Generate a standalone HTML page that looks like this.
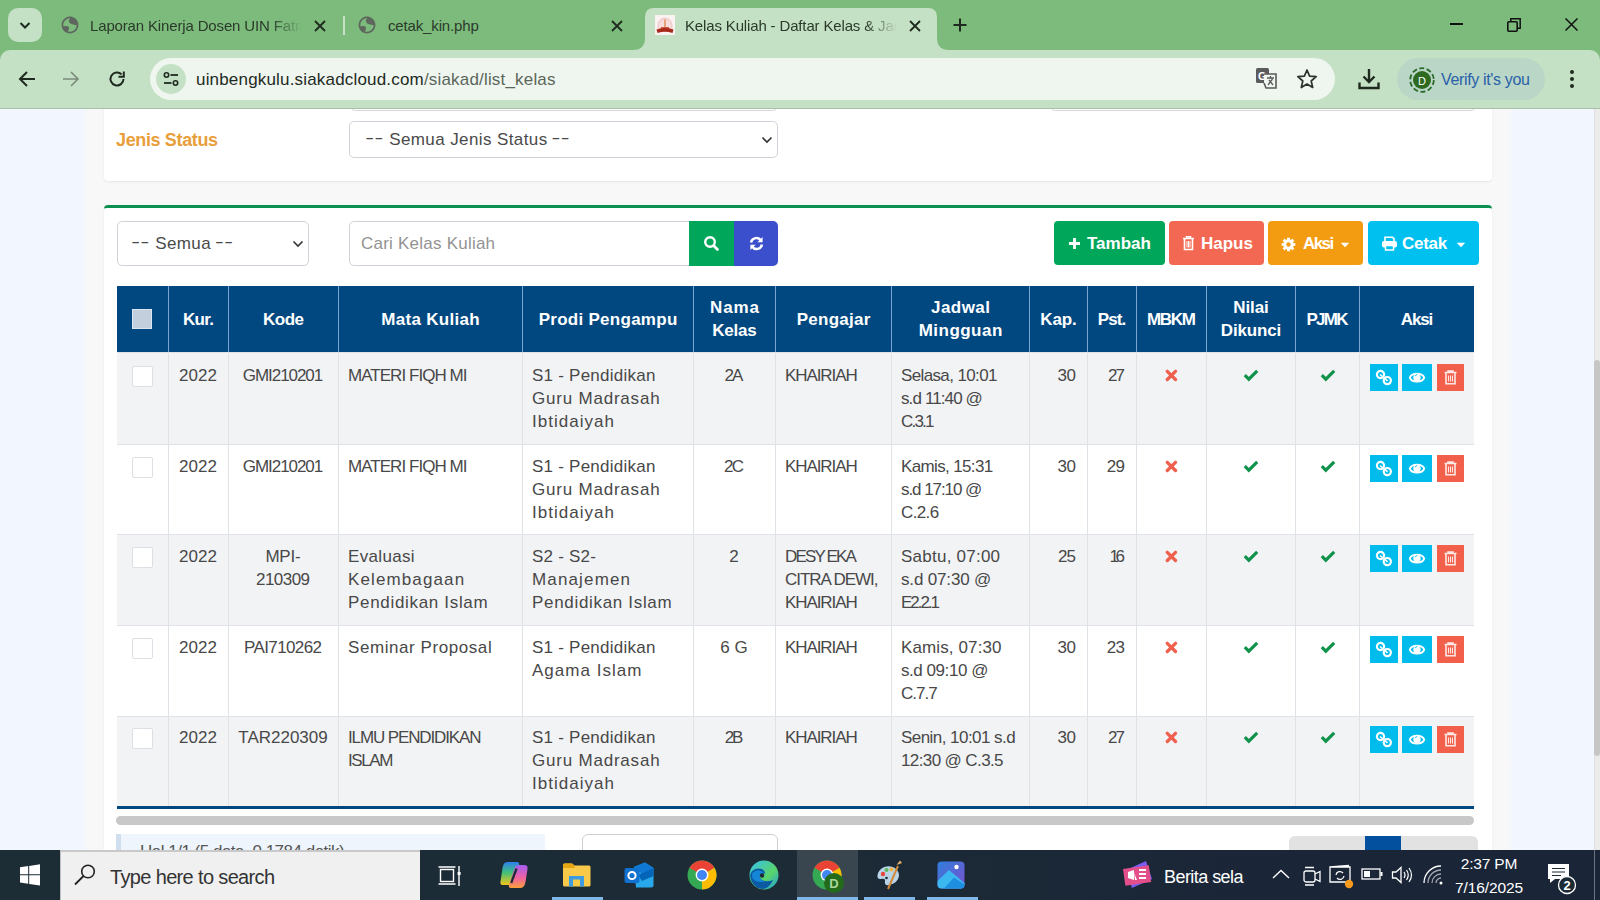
<!DOCTYPE html>
<html><head><meta charset="utf-8">
<style>
*{margin:0;padding:0;box-sizing:border-box}
html,body{width:1600px;height:900px;overflow:hidden;font-family:"Liberation Sans",sans-serif;background:#f8f8f8;position:relative}
.a{position:absolute}
/* chrome */
#tabstrip{left:0;top:0;width:1600px;height:50px;background:#7cbb7c}
#toolbar{left:0;top:50px;width:1600px;height:58px;background:#c5e1c5;border-radius:10px 10px 0 0}
.tabtxt{font-size:15px;letter-spacing:-0.15px;color:#2b3a2b;white-space:nowrap;overflow:hidden}
#omni{left:150px;top:58px;width:1185px;height:42px;border-radius:21px;background:#eff6ef}
/* page */
#page{left:0;top:108px;width:1600px;height:742px;overflow:hidden;background:#f8f8f8}
.card{background:#fff;border-radius:4px;box-shadow:0 1px 2px rgba(0,0,0,.08)}
.sel{border:1px solid #cfd4da;border-radius:5px;background:#fff;font-size:17px;color:#3d3d3d}
.btn{color:#fff;font-size:17px;font-weight:bold;border-radius:4px;white-space:nowrap}
#tbl{left:117px;top:286px}
.th{white-space:nowrap;position:absolute;top:178px;height:66px;background:#014881;color:#fff;font-weight:bold;font-size:17px;text-align:center;display:flex;align-items:center;justify-content:center;line-height:23px;border-left:1px solid #6f9cc8}
.row{position:absolute;left:117px;width:1357px}
.td{position:absolute;top:0;bottom:0;border-left:1px solid #dfe2e6;font-size:17px;color:#3a3a3a;line-height:23px;padding-top:11px;white-space:nowrap}
.tc{font-size:17px;color:#484848;line-height:23px;white-space:nowrap}
.pl{padding-left:10px}.pr{padding-right:11px}
.up{font-size:16px}
.ib{width:28px;height:27px}
.dd{font-size:13px;letter-spacing:2px;position:relative;top:-3px;font-weight:bold}
/* taskbar */
#taskbar{left:0;top:850px;width:1600px;height:50px;background:linear-gradient(90deg,#1c2d36 0%,#1c2b36 50%,#1a2538 85%,#1a2538 100%)}
</style></head><body>

<!-- ============ CHROME ============ -->
<div id="tabstrip" class="a"></div>
<div class="a" style="left:8px;top:8px;width:34px;height:34px;border-radius:10px;background:#c5e1c5"></div>
<svg class="a" style="left:17px;top:17px" width="16" height="16" viewBox="0 0 16 16"><path d="M3.5 6 L8 10.5 L12.5 6" stroke="#1f2a1f" stroke-width="2" fill="none"/></svg>

<!-- tab 1 -->
<svg class="a" style="left:61px;top:16px" width="18" height="18" viewBox="0 0 18 18"><g fill="#5e665e"><path d="M9 0.6A8.4 8.4 0 1 0 9.001 0.6ZM9 2.3A6.7 6.7 0 1 1 8.999 2.3Z" fill-rule="evenodd"/><path d="M9.8 1.5Q7.6 3.6 7.9 5.6Q8.4 7.6 11 8.2L16.6 9.6A7.6 7.6 0 0 0 9.8 1.5Z"/><path d="M1.5 10.4L5.4 10.1Q7.8 10.3 8.1 12.1Q8.2 14.3 5.8 16.4A7.6 7.6 0 0 1 1.5 10.4Z"/></g></svg>
<div class="a tabtxt" style="left:90px;top:17px;width:212px;height:22px;-webkit-mask-image:linear-gradient(90deg,#000 85%,transparent)">Laporan Kinerja Dosen UIN Fatmawati</div>
<svg class="a" style="left:313px;top:19px" width="14" height="14" viewBox="0 0 14 14"><path d="M2 2L12 12M12 2L2 12" stroke="#1f2a1f" stroke-width="1.8"/></svg>
<div class="a" style="left:343px;top:16px;width:2px;height:19px;background:#c7e3c7"></div>
<!-- tab 2 -->
<svg class="a" style="left:358px;top:16px" width="18" height="18" viewBox="0 0 18 18"><g fill="#5e665e"><path d="M9 0.6A8.4 8.4 0 1 0 9.001 0.6ZM9 2.3A6.7 6.7 0 1 1 8.999 2.3Z" fill-rule="evenodd"/><path d="M9.8 1.5Q7.6 3.6 7.9 5.6Q8.4 7.6 11 8.2L16.6 9.6A7.6 7.6 0 0 0 9.8 1.5Z"/><path d="M1.5 10.4L5.4 10.1Q7.8 10.3 8.1 12.1Q8.2 14.3 5.8 16.4A7.6 7.6 0 0 1 1.5 10.4Z"/></g></svg>
<div class="a tabtxt" style="left:388px;top:17px;width:200px;height:22px">cetak_kin.php</div>
<svg class="a" style="left:610px;top:19px" width="14" height="14" viewBox="0 0 14 14"><path d="M2 2L12 12M12 2L2 12" stroke="#1f2a1f" stroke-width="1.8"/></svg>
<!-- active tab -->
<svg class="a" style="left:633px;top:7px" width="316" height="44" viewBox="0 0 316 44"><path d="M0 43 Q12 43 12 31 L12 10 Q12 1 21 1 L295 1 Q304 1 304 10 L304 31 Q304 43 316 43 L316 44 L0 44 Z" fill="#c5e1c5"/></svg>
<svg class="a" style="left:655px;top:15px" width="20" height="20" viewBox="0 0 20 20"><rect width="20" height="20" fill="#fbf3f1"/><path d="M2.5 16V10A7.5 7.5 0 0 1 17.5 10V16Z" fill="#f1cfcf"/><path d="M4 15V10.5A6 6 0 0 1 16 10.5V15Z" fill="#f6dede"/><rect x="9" y="4.5" width="2" height="8" fill="#e8a07a"/><path d="M6 12H14V13.5H15.5V15.5H4.5V13.5H6Z" fill="#d0593c"/><path d="M1.5 14.5Q10 11.5 18.5 14.5L17.5 18Q10 15.5 2.5 18Z" fill="#a82a1c"/></svg>
<div class="a tabtxt" style="left:685px;top:17px;width:212px;height:22px;-webkit-mask-image:linear-gradient(90deg,#000 85%,transparent)">Kelas Kuliah - Daftar Kelas &amp; Jadwal</div>
<svg class="a" style="left:908px;top:19px" width="14" height="14" viewBox="0 0 14 14"><path d="M2 2L12 12M12 2L2 12" stroke="#1f2a1f" stroke-width="1.8"/></svg>
<svg class="a" style="left:953px;top:18px" width="14" height="14" viewBox="0 0 14 14"><path d="M7 0.5V13.5M0.5 7H13.5" stroke="#1f2a1f" stroke-width="2"/></svg>
<!-- window controls -->
<div class="a" style="left:1450px;top:23px;width:13px;height:2px;background:#111"></div>
<svg class="a" style="left:1507px;top:18px" width="14" height="14" viewBox="0 0 14 14"><rect x="0.8" y="3.8" width="9.4" height="9.4" rx="1" stroke="#111" stroke-width="1.6" fill="none"/><path d="M3.8 3.8V0.8H13.2V10.2H10.2" stroke="#111" stroke-width="1.5" fill="none"/></svg>
<svg class="a" style="left:1565px;top:18px" width="13" height="13" viewBox="0 0 13 13"><path d="M0.5 0.5L12.5 12.5M12.5 0.5L0.5 12.5" stroke="#111" stroke-width="1.5"/></svg>

<!-- toolbar -->
<div class="a" style="left:0;top:50px;width:1600px;height:12px;background:#7cbb7c"></div>
<div id="toolbar" class="a"></div>
<svg class="a" style="left:17px;top:69px" width="20" height="20" viewBox="0 0 20 20"><path d="M18 10H3M10 3L3 10L10 17" stroke="#1f2a1f" stroke-width="2" fill="none"/></svg>
<svg class="a" style="left:61px;top:69px" width="20" height="20" viewBox="0 0 20 20"><path d="M2 10H17M10 3L17 10L10 17" stroke="#7a8a7a" stroke-width="1.6" fill="none"/></svg>
<svg class="a" style="left:107px;top:69px" width="20" height="20" viewBox="0 0 20 20"><path d="M16.5 10 A6.5 6.5 0 1 1 14.6 5.4" stroke="#1f2a1f" stroke-width="2" fill="none"/><path d="M16.8 2.5V7.8H11.5" stroke="#1f2a1f" stroke-width="2" fill="none"/></svg>
<div id="omni" class="a"></div>
<div class="a" style="left:156px;top:64px;width:30px;height:30px;border-radius:15px;background:#c5e1c5"></div>
<svg class="a" style="left:163px;top:71px" width="16" height="16" viewBox="0 0 16 16"><circle cx="3.5" cy="4" r="2.2" stroke="#1f2a1f" stroke-width="1.6" fill="none"/><path d="M7.5 4H15" stroke="#1f2a1f" stroke-width="1.8"/><circle cx="12.5" cy="12" r="2.2" stroke="#1f2a1f" stroke-width="1.6" fill="none"/><path d="M1 12H8.5" stroke="#1f2a1f" stroke-width="1.8"/></svg>
<div class="a" style="left:196px;top:70px;letter-spacing:0.18px;font-size:17px;color:#1f2a1f;white-space:nowrap">uinbengkulu.siakadcloud.com<span style="color:#5b665b">/siakad/list_kelas</span></div>
<!-- translate -->
<svg class="a" style="left:1255px;top:67px" width="23" height="23" viewBox="0 0 23 23"><rect x="1" y="1" width="13" height="15" rx="1.5" fill="#5b5b5b"/><text x="3" y="13" font-size="11" font-weight="bold" fill="#fff" font-family="Liberation Sans">G</text><path d="M9 7H21V21H11L9 16" stroke="#5b5b5b" stroke-width="1.6" fill="#eff6ef"/><path d="M12 11H19M15.5 9V11M13 18L17.5 12M14 13L18 18" stroke="#5b5b5b" stroke-width="1.3"/></svg>
<svg class="a" style="left:1296px;top:68px" width="22" height="22" viewBox="0 0 22 22"><path d="M11 2L13.6 8.1L20.2 8.6L15.2 13L16.7 19.5L11 16L5.3 19.5L6.8 13L1.8 8.6L8.4 8.1Z" stroke="#2a332a" stroke-width="1.7" fill="none" stroke-linejoin="round"/></svg>
<!-- download -->
<svg class="a" style="left:1357px;top:67px" width="24" height="24" viewBox="0 0 24 24"><path d="M12 2V15M6.5 9.5L12 15L17.5 9.5M2.5 15.5V21H21.5V15.5" stroke="#1f2a1f" stroke-width="2.4" fill="none"/></svg>
<!-- verify pill -->
<div class="a" style="left:1397px;top:58px;width:148px;height:42px;border-radius:21px;background:#b9d6c7"></div>
<svg class="a" style="left:1407px;top:65px" width="30" height="30" viewBox="0 0 30 30"><circle cx="15" cy="15" r="11.8" stroke="#2b6b2b" stroke-width="1.8" fill="none" stroke-dasharray="5 2.5"/><circle cx="15" cy="15" r="9" fill="#2d6a1f"/><text x="15" y="19.5" text-anchor="middle" font-size="11" fill="#fff" font-family="Liberation Sans">D</text></svg>
<div class="a" style="left:1441px;top:71px;font-size:16px;letter-spacing:-0.35px;color:#2a61a8;white-space:nowrap">Verify it's you</div>
<svg class="a" style="left:1567px;top:68px" width="10" height="22" viewBox="0 0 10 22"><circle cx="5" cy="4" r="2" fill="#1f2a1f"/><circle cx="5" cy="11" r="2" fill="#1f2a1f"/><circle cx="5" cy="18" r="2" fill="#1f2a1f"/></svg>

<!-- ============ PAGE ============ -->
<div id="page" class="a">
<div class="a" style="left:0;top:0;width:88px;height:742px;background:linear-gradient(90deg,#f2f6fe 0,#f2f6fe 83px,#f8f8f8 88px)"></div>
<div class="a" style="left:1508px;top:0;width:86px;height:742px;background:linear-gradient(90deg,#f8f8f8 0,#f2f6fe 5px,#f2f6fe 100%)"></div>
<div class="a" style="left:1594px;top:0;width:6px;height:742px;background:#ebebeb;border-left:1px solid #dedede"></div>
<div class="a" style="left:1594px;top:252px;width:6px;height:396px;background:#c6c6c6;border-radius:3px 3px 3px 3px"></div>
<!-- top card -->
<div class="a card" style="left:104px;top:-40px;width:1388px;height:113px"></div>
<div class="a" style="left:350px;top:-29px;width:428px;height:32px;border:1px solid #d5d9de;border-radius:5px"></div>
<div class="a" style="left:1050px;top:-29px;width:426px;height:32px;border:1px solid #d5d9de;border-radius:5px"></div>
<div class="a" style="left:116px;top:22px;font-size:18px;letter-spacing:-0.36px;font-weight:bold;color:#e89f3b">Jenis Status</div>
<div class="a sel" style="left:349px;top:13px;width:429px;height:37px"></div>
<div class="a" style="left:366px;top:22px;font-size:17px;color:#4a4a4a;white-space:nowrap"><span class="dd">––</span> <span style="letter-spacing:.4px">Semua Jenis Status</span> <span class="dd">––</span></div>
<svg class="a" style="left:761px;top:27px" width="12" height="10" viewBox="0 0 12 10"><path d="M1.5 2.5L6 7L10.5 2.5" stroke="#333" stroke-width="1.6" fill="none"/></svg>
<!-- second card -->
<div class="a card" style="left:104px;top:97px;width:1388px;height:700px;border-top:3px solid #0b9150"></div>
<!-- card2 controls -->
<div class="a sel" style="left:117px;top:113px;width:192px;height:45px"></div>
<div class="a" style="left:132px;top:126px;font-size:17px;color:#4a4a4a;white-space:nowrap"><span class="dd">––</span> <span style="letter-spacing:.4px">Semua</span> <span class="dd">––</span></div>
<svg class="a" style="left:292px;top:131px" width="12" height="10" viewBox="0 0 12 10"><path d="M1.5 2.5L6 7L10.5 2.5" stroke="#333" stroke-width="1.6" fill="none"/></svg>
<div class="a" style="left:349px;top:113px;width:345px;height:45px;border:1px solid #cfd4da;border-radius:5px 0 0 5px;background:#fff"></div>
<div class="a" style="left:361px;top:126px;font-size:17px;letter-spacing:0.23px;color:#939393;white-space:nowrap">Cari Kelas Kuliah</div>
<div class="a" style="left:689px;top:113px;width:45px;height:45px;background:#00a65a"></div>
<svg class="a" style="left:703px;top:127px" width="17" height="17" viewBox="0 0 17 17"><circle cx="7" cy="7" r="4.8" stroke="#fff" stroke-width="2.4" fill="none"/><path d="M10.5 10.5L14.5 14.5" stroke="#fff" stroke-width="2.6" stroke-linecap="round"/></svg>
<div class="a" style="left:734px;top:113px;width:44px;height:45px;background:#3b4fcc;border-radius:0 5px 5px 0"></div>
<svg class="a" style="left:748px;top:127px" width="17" height="17" viewBox="0 0 17 17"><path d="M3 7.5A5.5 5.5 0 0 1 13 5.5M14 9.5A5.5 5.5 0 0 1 4 11.5" stroke="#fff" stroke-width="2.4" fill="none"/><path d="M14.6 2V7.2H9.4Z M2.4 15V9.8H7.6Z" fill="#fff"/></svg>
<div class="a btn" style="left:1054px;top:113px;width:111px;height:44px;background:#00a65a"></div>
<svg class="a" style="left:1068px;top:129px" width="13" height="13" viewBox="0 0 13 13"><path d="M6.5 1V12M1 6.5H12" stroke="#fff" stroke-width="2.8"/></svg>
<div class="a" style="left:1087px;top:126px;font-size:17px;font-weight:bold;color:#fff;white-space:nowrap">Tambah</div>
<div class="a btn" style="left:1169px;top:113px;width:95px;height:44px;background:#f26852"></div>
<svg class="a" style="left:1182px;top:127px" width="13" height="16" viewBox="0 0 13 16"><path d="M1 3.5H12M4.5 3.5V1.8H8.5V3.5" stroke="#fff" stroke-width="1.5" fill="none"/><path d="M2.5 4V14.5H10.5V4" stroke="#fff" stroke-width="1.6" fill="none"/><path d="M5 6V12.5M6.5 6V12.5M8 6V12.5" stroke="#fff" stroke-width="1"/></svg>
<div class="a" style="left:1201px;top:126px;font-size:17px;font-weight:bold;color:#fff;white-space:nowrap">Hapus</div>
<div class="a btn" style="left:1268px;top:113px;width:95px;height:44px;background:#f39c12"></div>
<svg class="a" style="left:1281px;top:129px" width="15" height="15" viewBox="0 0 15 15"><path d="M12.52 6.14 L14.33 5.97 L14.33 9.03 L12.52 8.86 L12.01 10.09 L13.41 11.25 L11.25 13.41 L10.09 12.01 L8.86 12.52 L9.03 14.33 L5.97 14.33 L6.14 12.52 L4.91 12.01 L3.75 13.41 L1.59 11.25 L2.99 10.09 L2.48 8.86 L0.67 9.03 L0.67 5.97 L2.48 6.14 L2.99 4.91 L1.59 3.75 L3.75 1.59 L4.91 2.99 L6.14 2.48 L5.97 0.67 L9.03 0.67 L8.86 2.48 L10.09 2.99 L11.25 1.59 L13.41 3.75 L12.01 4.91Z M9.7 7.5 A2.2 2.2 0 1 0 5.3 7.5 A2.2 2.2 0 1 0 9.7 7.5Z" fill="#fff" fill-rule="evenodd"/></svg>
<div class="a" style="left:1303px;top:126px;letter-spacing:-1.6px;font-size:17px;font-weight:bold;color:#fff;white-space:nowrap">Aksi</div>
<svg class="a" style="left:1340px;top:134px" width="10" height="6" viewBox="0 0 11 7"><path d="M0.5 1H10.5L5.5 6Z" fill="#fff"/></svg>
<div class="a btn" style="left:1368px;top:113px;width:111px;height:44px;background:#00c0ef"></div>
<svg class="a" style="left:1381px;top:128px" width="17" height="15" viewBox="0 0 17 15"><path d="M4 5V1.2H11.5L13 2.7V5" stroke="#fff" stroke-width="1.6" fill="none"/><rect x="1" y="5" width="15" height="6.5" rx="2" fill="#fff"/><rect x="4.5" y="9.5" width="8" height="4.5" fill="#00c0ef" stroke="#fff" stroke-width="1.5"/></svg>
<div class="a" style="left:1402px;top:126px;letter-spacing:-0.3px;font-size:17px;font-weight:bold;color:#fff;white-space:nowrap">Cetak</div>
<svg class="a" style="left:1456px;top:134px" width="10" height="6" viewBox="0 0 11 7"><path d="M0.5 1H10.5L5.5 6Z" fill="#fff"/></svg>
<!--TABLE-->
<div class="a" style="left:117px;top:178px;width:1357px;height:66px;background:#014881"></div>
<div class="a" style="left:132px;top:201px;width:20px;height:20px;background:#c3cfdc;border:1px solid #d9e6f3"></div>
<div class="a th" style="left:168px;width:60px"><div><span style="letter-spacing:-0.63px;margin-right:0.63px">Kur.</span></div></div>
<div class="a th" style="left:228px;width:110px"><div><span style="letter-spacing:-0.46px;margin-right:0.46px">Kode</span></div></div>
<div class="a th" style="left:338px;width:184px"><div><span style="letter-spacing:0.29px;margin-right:-0.29px">Mata Kuliah</span></div></div>
<div class="a th" style="left:522px;width:171px"><div><span style="letter-spacing:0.27px;margin-right:-0.27px">Prodi Pengampu</span></div></div>
<div class="a th" style="left:693px;width:82px"><div><span style="letter-spacing:0.95px;margin-right:-0.95px">Nama</span><br><span style="letter-spacing:-0.19px;margin-right:0.19px">Kelas</span></div></div>
<div class="a th" style="left:775px;width:116px"><div><span style="letter-spacing:0.26px;margin-right:-0.26px">Pengajar</span></div></div>
<div class="a th" style="left:891px;width:138px"><div><span style="letter-spacing:0.47px;margin-right:-0.47px">Jadwal</span><br><span style="letter-spacing:0.48px;margin-right:-0.48px">Mingguan</span></div></div>
<div class="a th" style="left:1029px;width:58px"><div><span style="letter-spacing:-0.13px;margin-right:0.13px">Kap.</span></div></div>
<div class="a th" style="left:1087px;width:49px"><div><span style="letter-spacing:-0.88px;margin-right:0.88px">Pst.</span></div></div>
<div class="a th" style="left:1136px;width:70px"><div><span style="letter-spacing:-1.30px;margin-right:1.30px">MBKM</span></div></div>
<div class="a th" style="left:1206px;width:89px"><div><span style="letter-spacing:-0.13px;margin-right:0.13px">Nilai</span><br><span style="letter-spacing:-0.17px;margin-right:0.17px">Dikunci</span></div></div>
<div class="a th" style="left:1295px;width:64px"><div><span style="letter-spacing:-1.71px;margin-right:1.71px">PJMK</span></div></div>
<div class="a th" style="left:1359px;width:115px"><div><span style="letter-spacing:-1.13px;margin-right:1.13px">Aksi</span></div></div>
<div class="a" style="left:168px;top:178px;width:1px;height:66px;background:#7aa6d1"></div>
<div class="a" style="left:228px;top:178px;width:1px;height:66px;background:#7aa6d1"></div>
<div class="a" style="left:338px;top:178px;width:1px;height:66px;background:#7aa6d1"></div>
<div class="a" style="left:522px;top:178px;width:1px;height:66px;background:#7aa6d1"></div>
<div class="a" style="left:693px;top:178px;width:1px;height:66px;background:#7aa6d1"></div>
<div class="a" style="left:775px;top:178px;width:1px;height:66px;background:#7aa6d1"></div>
<div class="a" style="left:891px;top:178px;width:1px;height:66px;background:#7aa6d1"></div>
<div class="a" style="left:1029px;top:178px;width:1px;height:66px;background:#7aa6d1"></div>
<div class="a" style="left:1087px;top:178px;width:1px;height:66px;background:#7aa6d1"></div>
<div class="a" style="left:1136px;top:178px;width:1px;height:66px;background:#7aa6d1"></div>
<div class="a" style="left:1206px;top:178px;width:1px;height:66px;background:#7aa6d1"></div>
<div class="a" style="left:1295px;top:178px;width:1px;height:66px;background:#7aa6d1"></div>
<div class="a" style="left:1359px;top:178px;width:1px;height:66px;background:#7aa6d1"></div>
<div class="a" style="left:117px;top:244px;width:1357px;height:92px;background:#f2f3f5;border-top:1px solid #dfe2e6"></div>
<div class="a" style="left:168px;top:244px;width:1px;height:92px;background:#dfe2e6"></div>
<div class="a" style="left:228px;top:244px;width:1px;height:92px;background:#dfe2e6"></div>
<div class="a" style="left:338px;top:244px;width:1px;height:92px;background:#dfe2e6"></div>
<div class="a" style="left:522px;top:244px;width:1px;height:92px;background:#dfe2e6"></div>
<div class="a" style="left:693px;top:244px;width:1px;height:92px;background:#dfe2e6"></div>
<div class="a" style="left:775px;top:244px;width:1px;height:92px;background:#dfe2e6"></div>
<div class="a" style="left:891px;top:244px;width:1px;height:92px;background:#dfe2e6"></div>
<div class="a" style="left:1029px;top:244px;width:1px;height:92px;background:#dfe2e6"></div>
<div class="a" style="left:1087px;top:244px;width:1px;height:92px;background:#dfe2e6"></div>
<div class="a" style="left:1136px;top:244px;width:1px;height:92px;background:#dfe2e6"></div>
<div class="a" style="left:1206px;top:244px;width:1px;height:92px;background:#dfe2e6"></div>
<div class="a" style="left:1295px;top:244px;width:1px;height:92px;background:#dfe2e6"></div>
<div class="a" style="left:1359px;top:244px;width:1px;height:92px;background:#dfe2e6"></div>
<div class="a" style="left:132px;top:258px;width:21px;height:21px;background:#fff;border:1px solid #dcdfe3;border-radius:2px"></div>
<div class="a tc" style="left:168px;top:256px;width:60px;text-align:center">2022</div>
<div class="a tc" style="left:228px;top:256px;width:110px;text-align:center"><span style="letter-spacing:-1.07px;margin-right:1.07px">GMI210201</span></div>
<div class="a tc pl" style="left:338px;top:256px;width:184px;text-align:left"><span style="letter-spacing:-0.96px">MATERI FIQH MI</span></div>
<div class="a tc pl" style="left:522px;top:256px;width:171px;text-align:left"><span style="letter-spacing:0.24px">S1 - Pendidikan</span><br><span style="letter-spacing:0.79px">Guru Madrasah</span><br><span style="letter-spacing:1.01px">Ibtidaiyah</span></div>
<div class="a tc" style="left:693px;top:256px;width:82px;text-align:center"><span style="letter-spacing:-1.88px;margin-right:1.88px">2A</span></div>
<div class="a tc pl" style="left:775px;top:256px;width:116px;text-align:left"><span style="letter-spacing:-1.09px">KHAIRIAH</span></div>
<div class="a tc pl" style="left:891px;top:256px;width:138px;text-align:left"><span style="letter-spacing:-0.63px">Selasa, 10:01</span><br><span style="letter-spacing:-0.88px">s.d 11:40 @</span><br><span style="letter-spacing:-1.78px">C.3.1</span></div>
<div class="a tc pr" style="left:1029px;top:256px;width:58px;text-align:right"><span style="letter-spacing:-0.48px;margin-right:0.48px">30</span></div>
<div class="a tc pr" style="left:1087px;top:256px;width:49px;text-align:right"><span style="letter-spacing:-1.88px;margin-right:1.88px">27</span></div>
<div class="a" style="left:1165px;top:260px;width:13px;height:13px"><svg width="13" height="13" viewBox="0 0 13 13"><path d="M2.3 2.3L10.5 10.5M10.5 2.3L2.3 10.5" stroke="#f0604f" stroke-width="3.3" stroke-linecap="round"/></svg></div>
<div class="a" style="left:1243px;top:260px;width:16px;height:13px"><svg width="16" height="13" viewBox="0 0 16 13"><path d="M1.8 6.2L5.8 10.2L14.2 1.8" stroke="#10924a" stroke-width="3.1" fill="none" stroke-linecap="butt"/></svg></div>
<div class="a" style="left:1320px;top:260px;width:16px;height:13px"><svg width="16" height="13" viewBox="0 0 16 13"><path d="M1.8 6.2L5.8 10.2L14.2 1.8" stroke="#10924a" stroke-width="3.1" fill="none" stroke-linecap="butt"/></svg></div>
<div class="a ib" style="left:1370px;top:256px;background:#00bcec"><svg width="28" height="27" viewBox="0 0 28 27"><g stroke="#fff" stroke-width="2.2" fill="none"><circle cx="10.5" cy="10.5" r="3.6"/><circle cx="17.3" cy="16.6" r="3.6"/></g><path d="M10 10.5L13 13M14.5 14L17.5 16.8" stroke="#fff" stroke-width="1.6"/></svg></div>
<div class="a ib" style="left:1402px;top:256px;width:30px;background:#00bcec"><svg width="30" height="27" viewBox="0 0 30 27"><path d="M7.8 13.6C9.6 8.4 20.4 8.4 22.2 13.6C20.4 18.9 9.6 18.9 7.8 13.6Z" stroke="#fff" stroke-width="1.9" fill="none"/><circle cx="15" cy="13.6" r="3.7" fill="#fff"/><path d="M13.2 12.2A2.2 2.2 0 0 1 15.2 10.6" stroke="#00bcec" stroke-width="0.9" fill="none"/></svg></div>
<div class="a ib" style="left:1437px;top:256px;width:27px;background:#f2604c"><svg width="27" height="27" viewBox="0 0 27 27"><path d="M7.5 8.5H19.5M11 8.5V7H16V8.5" stroke="#fde9e5" stroke-width="1.6" fill="none"/><path d="M9 9V19.8H18V9" stroke="#fde9e5" stroke-width="1.6" fill="none"/><path d="M11.5 11.5V17.5M13.5 11.5V17.5M15.5 11.5V17.5" stroke="#fde9e5" stroke-width="1.1"/></svg></div>
<div class="a" style="left:117px;top:336px;width:1357px;height:90px;background:#ffffff;border-top:1px solid #dfe2e6"></div>
<div class="a" style="left:168px;top:336px;width:1px;height:90px;background:#dfe2e6"></div>
<div class="a" style="left:228px;top:336px;width:1px;height:90px;background:#dfe2e6"></div>
<div class="a" style="left:338px;top:336px;width:1px;height:90px;background:#dfe2e6"></div>
<div class="a" style="left:522px;top:336px;width:1px;height:90px;background:#dfe2e6"></div>
<div class="a" style="left:693px;top:336px;width:1px;height:90px;background:#dfe2e6"></div>
<div class="a" style="left:775px;top:336px;width:1px;height:90px;background:#dfe2e6"></div>
<div class="a" style="left:891px;top:336px;width:1px;height:90px;background:#dfe2e6"></div>
<div class="a" style="left:1029px;top:336px;width:1px;height:90px;background:#dfe2e6"></div>
<div class="a" style="left:1087px;top:336px;width:1px;height:90px;background:#dfe2e6"></div>
<div class="a" style="left:1136px;top:336px;width:1px;height:90px;background:#dfe2e6"></div>
<div class="a" style="left:1206px;top:336px;width:1px;height:90px;background:#dfe2e6"></div>
<div class="a" style="left:1295px;top:336px;width:1px;height:90px;background:#dfe2e6"></div>
<div class="a" style="left:1359px;top:336px;width:1px;height:90px;background:#dfe2e6"></div>
<div class="a" style="left:132px;top:349px;width:21px;height:21px;background:#fff;border:1px solid #dcdfe3;border-radius:2px"></div>
<div class="a tc" style="left:168px;top:347px;width:60px;text-align:center">2022</div>
<div class="a tc" style="left:228px;top:347px;width:110px;text-align:center"><span style="letter-spacing:-1.07px;margin-right:1.07px">GMI210201</span></div>
<div class="a tc pl" style="left:338px;top:347px;width:184px;text-align:left"><span style="letter-spacing:-0.96px">MATERI FIQH MI</span></div>
<div class="a tc pl" style="left:522px;top:347px;width:171px;text-align:left"><span style="letter-spacing:0.24px">S1 - Pendidikan</span><br><span style="letter-spacing:0.79px">Guru Madrasah</span><br><span style="letter-spacing:1.01px">Ibtidaiyah</span></div>
<div class="a tc" style="left:693px;top:347px;width:82px;text-align:center"><span style="letter-spacing:-1.88px;margin-right:1.88px">2C</span></div>
<div class="a tc pl" style="left:775px;top:347px;width:116px;text-align:left"><span style="letter-spacing:-1.09px">KHAIRIAH</span></div>
<div class="a tc pl" style="left:891px;top:347px;width:138px;text-align:left"><span style="letter-spacing:-0.64px">Kamis, 15:31</span><br><span style="letter-spacing:-1.06px">s.d 17:10 @</span><br><span style="letter-spacing:-0.63px">C.2.6</span></div>
<div class="a tc pr" style="left:1029px;top:347px;width:58px;text-align:right"><span style="letter-spacing:-0.48px;margin-right:0.48px">30</span></div>
<div class="a tc pr" style="left:1087px;top:347px;width:49px;text-align:right"><span style="letter-spacing:-0.58px;margin-right:0.58px">29</span></div>
<div class="a" style="left:1165px;top:351px;width:13px;height:13px"><svg width="13" height="13" viewBox="0 0 13 13"><path d="M2.3 2.3L10.5 10.5M10.5 2.3L2.3 10.5" stroke="#f0604f" stroke-width="3.3" stroke-linecap="round"/></svg></div>
<div class="a" style="left:1243px;top:351px;width:16px;height:13px"><svg width="16" height="13" viewBox="0 0 16 13"><path d="M1.8 6.2L5.8 10.2L14.2 1.8" stroke="#10924a" stroke-width="3.1" fill="none" stroke-linecap="butt"/></svg></div>
<div class="a" style="left:1320px;top:351px;width:16px;height:13px"><svg width="16" height="13" viewBox="0 0 16 13"><path d="M1.8 6.2L5.8 10.2L14.2 1.8" stroke="#10924a" stroke-width="3.1" fill="none" stroke-linecap="butt"/></svg></div>
<div class="a ib" style="left:1370px;top:347px;background:#00bcec"><svg width="28" height="27" viewBox="0 0 28 27"><g stroke="#fff" stroke-width="2.2" fill="none"><circle cx="10.5" cy="10.5" r="3.6"/><circle cx="17.3" cy="16.6" r="3.6"/></g><path d="M10 10.5L13 13M14.5 14L17.5 16.8" stroke="#fff" stroke-width="1.6"/></svg></div>
<div class="a ib" style="left:1402px;top:347px;width:30px;background:#00bcec"><svg width="30" height="27" viewBox="0 0 30 27"><path d="M7.8 13.6C9.6 8.4 20.4 8.4 22.2 13.6C20.4 18.9 9.6 18.9 7.8 13.6Z" stroke="#fff" stroke-width="1.9" fill="none"/><circle cx="15" cy="13.6" r="3.7" fill="#fff"/><path d="M13.2 12.2A2.2 2.2 0 0 1 15.2 10.6" stroke="#00bcec" stroke-width="0.9" fill="none"/></svg></div>
<div class="a ib" style="left:1437px;top:347px;width:27px;background:#f2604c"><svg width="27" height="27" viewBox="0 0 27 27"><path d="M7.5 8.5H19.5M11 8.5V7H16V8.5" stroke="#fde9e5" stroke-width="1.6" fill="none"/><path d="M9 9V19.8H18V9" stroke="#fde9e5" stroke-width="1.6" fill="none"/><path d="M11.5 11.5V17.5M13.5 11.5V17.5M15.5 11.5V17.5" stroke="#fde9e5" stroke-width="1.1"/></svg></div>
<div class="a" style="left:117px;top:426px;width:1357px;height:91px;background:#f2f3f5;border-top:1px solid #dfe2e6"></div>
<div class="a" style="left:168px;top:426px;width:1px;height:91px;background:#dfe2e6"></div>
<div class="a" style="left:228px;top:426px;width:1px;height:91px;background:#dfe2e6"></div>
<div class="a" style="left:338px;top:426px;width:1px;height:91px;background:#dfe2e6"></div>
<div class="a" style="left:522px;top:426px;width:1px;height:91px;background:#dfe2e6"></div>
<div class="a" style="left:693px;top:426px;width:1px;height:91px;background:#dfe2e6"></div>
<div class="a" style="left:775px;top:426px;width:1px;height:91px;background:#dfe2e6"></div>
<div class="a" style="left:891px;top:426px;width:1px;height:91px;background:#dfe2e6"></div>
<div class="a" style="left:1029px;top:426px;width:1px;height:91px;background:#dfe2e6"></div>
<div class="a" style="left:1087px;top:426px;width:1px;height:91px;background:#dfe2e6"></div>
<div class="a" style="left:1136px;top:426px;width:1px;height:91px;background:#dfe2e6"></div>
<div class="a" style="left:1206px;top:426px;width:1px;height:91px;background:#dfe2e6"></div>
<div class="a" style="left:1295px;top:426px;width:1px;height:91px;background:#dfe2e6"></div>
<div class="a" style="left:1359px;top:426px;width:1px;height:91px;background:#dfe2e6"></div>
<div class="a" style="left:132px;top:439px;width:21px;height:21px;background:#fff;border:1px solid #dcdfe3;border-radius:2px"></div>
<div class="a tc" style="left:168px;top:437px;width:60px;text-align:center">2022</div>
<div class="a tc" style="left:228px;top:437px;width:110px;text-align:center"><span style="letter-spacing:-0.21px;margin-right:0.21px">MPI-</span><br><span style="letter-spacing:-0.54px;margin-right:0.54px">210309</span></div>
<div class="a tc pl" style="left:338px;top:437px;width:184px;text-align:left"><span style="letter-spacing:0.33px">Evaluasi</span><br><span style="letter-spacing:1.12px">Kelembagaan</span><br><span style="letter-spacing:0.68px">Pendidikan Islam</span></div>
<div class="a tc pl" style="left:522px;top:437px;width:171px;text-align:left"><span style="letter-spacing:0.22px">S2 - S2-</span><br><span style="letter-spacing:1.15px">Manajemen</span><br><span style="letter-spacing:0.68px">Pendidikan Islam</span></div>
<div class="a tc" style="left:693px;top:437px;width:82px;text-align:center">2</div>
<div class="a tc pl" style="left:775px;top:437px;width:116px;text-align:left"><span style="letter-spacing:-1.85px">DESY EKA</span><br><span style="letter-spacing:-1.04px">CITRA DEWI,</span><br><span style="letter-spacing:-1.09px">KHAIRIAH</span></div>
<div class="a tc pl" style="left:891px;top:437px;width:138px;text-align:left"><span style="letter-spacing:0.24px">Sabtu, 07:00</span><br><span style="letter-spacing:-0.16px">s.d 07:30 @</span><br><span style="letter-spacing:-2.04px">E2.2.1</span></div>
<div class="a tc pr" style="left:1029px;top:437px;width:58px;text-align:right"><span style="letter-spacing:-0.88px;margin-right:0.88px">25</span></div>
<div class="a tc pr" style="left:1087px;top:437px;width:49px;text-align:right"><span style="letter-spacing:-3.38px;margin-right:3.38px">16</span></div>
<div class="a" style="left:1165px;top:441px;width:13px;height:13px"><svg width="13" height="13" viewBox="0 0 13 13"><path d="M2.3 2.3L10.5 10.5M10.5 2.3L2.3 10.5" stroke="#f0604f" stroke-width="3.3" stroke-linecap="round"/></svg></div>
<div class="a" style="left:1243px;top:441px;width:16px;height:13px"><svg width="16" height="13" viewBox="0 0 16 13"><path d="M1.8 6.2L5.8 10.2L14.2 1.8" stroke="#10924a" stroke-width="3.1" fill="none" stroke-linecap="butt"/></svg></div>
<div class="a" style="left:1320px;top:441px;width:16px;height:13px"><svg width="16" height="13" viewBox="0 0 16 13"><path d="M1.8 6.2L5.8 10.2L14.2 1.8" stroke="#10924a" stroke-width="3.1" fill="none" stroke-linecap="butt"/></svg></div>
<div class="a ib" style="left:1370px;top:437px;background:#00bcec"><svg width="28" height="27" viewBox="0 0 28 27"><g stroke="#fff" stroke-width="2.2" fill="none"><circle cx="10.5" cy="10.5" r="3.6"/><circle cx="17.3" cy="16.6" r="3.6"/></g><path d="M10 10.5L13 13M14.5 14L17.5 16.8" stroke="#fff" stroke-width="1.6"/></svg></div>
<div class="a ib" style="left:1402px;top:437px;width:30px;background:#00bcec"><svg width="30" height="27" viewBox="0 0 30 27"><path d="M7.8 13.6C9.6 8.4 20.4 8.4 22.2 13.6C20.4 18.9 9.6 18.9 7.8 13.6Z" stroke="#fff" stroke-width="1.9" fill="none"/><circle cx="15" cy="13.6" r="3.7" fill="#fff"/><path d="M13.2 12.2A2.2 2.2 0 0 1 15.2 10.6" stroke="#00bcec" stroke-width="0.9" fill="none"/></svg></div>
<div class="a ib" style="left:1437px;top:437px;width:27px;background:#f2604c"><svg width="27" height="27" viewBox="0 0 27 27"><path d="M7.5 8.5H19.5M11 8.5V7H16V8.5" stroke="#fde9e5" stroke-width="1.6" fill="none"/><path d="M9 9V19.8H18V9" stroke="#fde9e5" stroke-width="1.6" fill="none"/><path d="M11.5 11.5V17.5M13.5 11.5V17.5M15.5 11.5V17.5" stroke="#fde9e5" stroke-width="1.1"/></svg></div>
<div class="a" style="left:117px;top:517px;width:1357px;height:91px;background:#ffffff;border-top:1px solid #dfe2e6"></div>
<div class="a" style="left:168px;top:517px;width:1px;height:91px;background:#dfe2e6"></div>
<div class="a" style="left:228px;top:517px;width:1px;height:91px;background:#dfe2e6"></div>
<div class="a" style="left:338px;top:517px;width:1px;height:91px;background:#dfe2e6"></div>
<div class="a" style="left:522px;top:517px;width:1px;height:91px;background:#dfe2e6"></div>
<div class="a" style="left:693px;top:517px;width:1px;height:91px;background:#dfe2e6"></div>
<div class="a" style="left:775px;top:517px;width:1px;height:91px;background:#dfe2e6"></div>
<div class="a" style="left:891px;top:517px;width:1px;height:91px;background:#dfe2e6"></div>
<div class="a" style="left:1029px;top:517px;width:1px;height:91px;background:#dfe2e6"></div>
<div class="a" style="left:1087px;top:517px;width:1px;height:91px;background:#dfe2e6"></div>
<div class="a" style="left:1136px;top:517px;width:1px;height:91px;background:#dfe2e6"></div>
<div class="a" style="left:1206px;top:517px;width:1px;height:91px;background:#dfe2e6"></div>
<div class="a" style="left:1295px;top:517px;width:1px;height:91px;background:#dfe2e6"></div>
<div class="a" style="left:1359px;top:517px;width:1px;height:91px;background:#dfe2e6"></div>
<div class="a" style="left:132px;top:530px;width:21px;height:21px;background:#fff;border:1px solid #dcdfe3;border-radius:2px"></div>
<div class="a tc" style="left:168px;top:528px;width:60px;text-align:center">2022</div>
<div class="a tc" style="left:228px;top:528px;width:110px;text-align:center"><span style="letter-spacing:-0.63px;margin-right:0.63px">PAI710262</span></div>
<div class="a tc pl" style="left:338px;top:528px;width:184px;text-align:left"><span style="letter-spacing:0.57px">Seminar Proposal</span></div>
<div class="a tc pl" style="left:522px;top:528px;width:171px;text-align:left"><span style="letter-spacing:0.24px">S1 - Pendidikan</span><br><span style="letter-spacing:1.02px">Agama Islam</span></div>
<div class="a tc" style="left:693px;top:528px;width:82px;text-align:center">6 G</div>
<div class="a tc pl" style="left:775px;top:528px;width:116px;text-align:left"><span style="letter-spacing:-1.09px">KHAIRIAH</span></div>
<div class="a tc pl" style="left:891px;top:528px;width:138px;text-align:left"><span style="letter-spacing:0.12px">Kamis, 07:30</span><br><span style="letter-spacing:-0.45px">s.d 09:10 @</span><br><span style="letter-spacing:-0.98px">C.7.7</span></div>
<div class="a tc pr" style="left:1029px;top:528px;width:58px;text-align:right"><span style="letter-spacing:-0.48px;margin-right:0.48px">30</span></div>
<div class="a tc pr" style="left:1087px;top:528px;width:49px;text-align:right"><span style="letter-spacing:-0.58px;margin-right:0.58px">23</span></div>
<div class="a" style="left:1165px;top:532px;width:13px;height:13px"><svg width="13" height="13" viewBox="0 0 13 13"><path d="M2.3 2.3L10.5 10.5M10.5 2.3L2.3 10.5" stroke="#f0604f" stroke-width="3.3" stroke-linecap="round"/></svg></div>
<div class="a" style="left:1243px;top:532px;width:16px;height:13px"><svg width="16" height="13" viewBox="0 0 16 13"><path d="M1.8 6.2L5.8 10.2L14.2 1.8" stroke="#10924a" stroke-width="3.1" fill="none" stroke-linecap="butt"/></svg></div>
<div class="a" style="left:1320px;top:532px;width:16px;height:13px"><svg width="16" height="13" viewBox="0 0 16 13"><path d="M1.8 6.2L5.8 10.2L14.2 1.8" stroke="#10924a" stroke-width="3.1" fill="none" stroke-linecap="butt"/></svg></div>
<div class="a ib" style="left:1370px;top:528px;background:#00bcec"><svg width="28" height="27" viewBox="0 0 28 27"><g stroke="#fff" stroke-width="2.2" fill="none"><circle cx="10.5" cy="10.5" r="3.6"/><circle cx="17.3" cy="16.6" r="3.6"/></g><path d="M10 10.5L13 13M14.5 14L17.5 16.8" stroke="#fff" stroke-width="1.6"/></svg></div>
<div class="a ib" style="left:1402px;top:528px;width:30px;background:#00bcec"><svg width="30" height="27" viewBox="0 0 30 27"><path d="M7.8 13.6C9.6 8.4 20.4 8.4 22.2 13.6C20.4 18.9 9.6 18.9 7.8 13.6Z" stroke="#fff" stroke-width="1.9" fill="none"/><circle cx="15" cy="13.6" r="3.7" fill="#fff"/><path d="M13.2 12.2A2.2 2.2 0 0 1 15.2 10.6" stroke="#00bcec" stroke-width="0.9" fill="none"/></svg></div>
<div class="a ib" style="left:1437px;top:528px;width:27px;background:#f2604c"><svg width="27" height="27" viewBox="0 0 27 27"><path d="M7.5 8.5H19.5M11 8.5V7H16V8.5" stroke="#fde9e5" stroke-width="1.6" fill="none"/><path d="M9 9V19.8H18V9" stroke="#fde9e5" stroke-width="1.6" fill="none"/><path d="M11.5 11.5V17.5M13.5 11.5V17.5M15.5 11.5V17.5" stroke="#fde9e5" stroke-width="1.1"/></svg></div>
<div class="a" style="left:117px;top:608px;width:1357px;height:90px;background:#f2f3f5;border-top:1px solid #dfe2e6"></div>
<div class="a" style="left:168px;top:608px;width:1px;height:90px;background:#dfe2e6"></div>
<div class="a" style="left:228px;top:608px;width:1px;height:90px;background:#dfe2e6"></div>
<div class="a" style="left:338px;top:608px;width:1px;height:90px;background:#dfe2e6"></div>
<div class="a" style="left:522px;top:608px;width:1px;height:90px;background:#dfe2e6"></div>
<div class="a" style="left:693px;top:608px;width:1px;height:90px;background:#dfe2e6"></div>
<div class="a" style="left:775px;top:608px;width:1px;height:90px;background:#dfe2e6"></div>
<div class="a" style="left:891px;top:608px;width:1px;height:90px;background:#dfe2e6"></div>
<div class="a" style="left:1029px;top:608px;width:1px;height:90px;background:#dfe2e6"></div>
<div class="a" style="left:1087px;top:608px;width:1px;height:90px;background:#dfe2e6"></div>
<div class="a" style="left:1136px;top:608px;width:1px;height:90px;background:#dfe2e6"></div>
<div class="a" style="left:1206px;top:608px;width:1px;height:90px;background:#dfe2e6"></div>
<div class="a" style="left:1295px;top:608px;width:1px;height:90px;background:#dfe2e6"></div>
<div class="a" style="left:1359px;top:608px;width:1px;height:90px;background:#dfe2e6"></div>
<div class="a" style="left:132px;top:620px;width:21px;height:21px;background:#fff;border:1px solid #dcdfe3;border-radius:2px"></div>
<div class="a tc" style="left:168px;top:618px;width:60px;text-align:center">2022</div>
<div class="a tc" style="left:228px;top:618px;width:110px;text-align:center">TAR220309</div>
<div class="a tc pl" style="left:338px;top:618px;width:184px;text-align:left"><span style="letter-spacing:-1.12px">ILMU PENDIDIKAN</span><br><span style="letter-spacing:-1.43px">ISLAM</span></div>
<div class="a tc pl" style="left:522px;top:618px;width:171px;text-align:left"><span style="letter-spacing:0.24px">S1 - Pendidikan</span><br><span style="letter-spacing:0.79px">Guru Madrasah</span><br><span style="letter-spacing:1.01px">Ibtidaiyah</span></div>
<div class="a tc" style="left:693px;top:618px;width:82px;text-align:center"><span style="letter-spacing:-2.28px;margin-right:2.28px">2B</span></div>
<div class="a tc pl" style="left:775px;top:618px;width:116px;text-align:left"><span style="letter-spacing:-1.09px">KHAIRIAH</span></div>
<div class="a tc pl" style="left:891px;top:618px;width:138px;text-align:left"><span style="letter-spacing:-0.55px">Senin, 10:01 s.d</span><br><span style="letter-spacing:-0.61px">12:30 @ C.3.5</span></div>
<div class="a tc pr" style="left:1029px;top:618px;width:58px;text-align:right"><span style="letter-spacing:-0.48px;margin-right:0.48px">30</span></div>
<div class="a tc pr" style="left:1087px;top:618px;width:49px;text-align:right"><span style="letter-spacing:-1.88px;margin-right:1.88px">27</span></div>
<div class="a" style="left:1165px;top:622px;width:13px;height:13px"><svg width="13" height="13" viewBox="0 0 13 13"><path d="M2.3 2.3L10.5 10.5M10.5 2.3L2.3 10.5" stroke="#f0604f" stroke-width="3.3" stroke-linecap="round"/></svg></div>
<div class="a" style="left:1243px;top:622px;width:16px;height:13px"><svg width="16" height="13" viewBox="0 0 16 13"><path d="M1.8 6.2L5.8 10.2L14.2 1.8" stroke="#10924a" stroke-width="3.1" fill="none" stroke-linecap="butt"/></svg></div>
<div class="a" style="left:1320px;top:622px;width:16px;height:13px"><svg width="16" height="13" viewBox="0 0 16 13"><path d="M1.8 6.2L5.8 10.2L14.2 1.8" stroke="#10924a" stroke-width="3.1" fill="none" stroke-linecap="butt"/></svg></div>
<div class="a ib" style="left:1370px;top:618px;background:#00bcec"><svg width="28" height="27" viewBox="0 0 28 27"><g stroke="#fff" stroke-width="2.2" fill="none"><circle cx="10.5" cy="10.5" r="3.6"/><circle cx="17.3" cy="16.6" r="3.6"/></g><path d="M10 10.5L13 13M14.5 14L17.5 16.8" stroke="#fff" stroke-width="1.6"/></svg></div>
<div class="a ib" style="left:1402px;top:618px;width:30px;background:#00bcec"><svg width="30" height="27" viewBox="0 0 30 27"><path d="M7.8 13.6C9.6 8.4 20.4 8.4 22.2 13.6C20.4 18.9 9.6 18.9 7.8 13.6Z" stroke="#fff" stroke-width="1.9" fill="none"/><circle cx="15" cy="13.6" r="3.7" fill="#fff"/><path d="M13.2 12.2A2.2 2.2 0 0 1 15.2 10.6" stroke="#00bcec" stroke-width="0.9" fill="none"/></svg></div>
<div class="a ib" style="left:1437px;top:618px;width:27px;background:#f2604c"><svg width="27" height="27" viewBox="0 0 27 27"><path d="M7.5 8.5H19.5M11 8.5V7H16V8.5" stroke="#fde9e5" stroke-width="1.6" fill="none"/><path d="M9 9V19.8H18V9" stroke="#fde9e5" stroke-width="1.6" fill="none"/><path d="M11.5 11.5V17.5M13.5 11.5V17.5M15.5 11.5V17.5" stroke="#fde9e5" stroke-width="1.1"/></svg></div>
<div class="a" style="left:117px;top:698px;width:1357px;height:3px;background:#014881"></div>
<!--/TABLE-->
<!-- hscroll + footer -->
<div class="a" style="left:116px;top:708px;width:1358px;height:9px;border-radius:5px;background:#c8c8c8"></div>
<div class="a" style="left:116px;top:726px;width:429px;height:40px;background:#eef5fc;border-left:5px solid #cfdfee"></div>
<div class="a" style="left:140px;top:734px;font-size:17px;letter-spacing:-0.5px;color:#555;white-space:nowrap">Hal 1/1 (5 data, 0.1784 detik)</div>
<div class="a" style="left:582px;top:726px;width:196px;height:40px;border:1px solid #cfcfcf;border-radius:6px;background:#fff"></div>
<div class="a" style="left:1289px;top:728px;width:189px;height:40px;border-radius:6px;background:#e2e2e2"></div>
<div class="a" style="left:1365px;top:728px;width:36px;height:40px;background:#03509f"></div>
</div>

<div class="a" style="left:0;top:108px;width:1600px;height:1px;background:#a9bfa9;z-index:2"></div>
<!-- ============ TASKBAR ============ -->
<div id="taskbar" class="a"></div>
<svg class="a" style="left:19px;top:864px" width="22" height="22" viewBox="0 0 22 22"><path d="M1 3.2L9.2 2V10.3H1Z M10.2 1.9L21 0.3V10.3H10.2Z M1 11.3H9.2V19.7L1 18.6Z M10.2 11.3H21V21.5L10.2 19.9Z" fill="#fff"/></svg>
<div class="a" style="left:60px;top:850px;width:360px;height:50px;background:#f0f0f0;border-top:2px solid #c9c9c9;border-left:1px solid #bfbfbf"></div>
<svg class="a" style="left:72px;top:862px" width="26" height="26" viewBox="0 0 26 26"><circle cx="16" cy="9.5" r="6.3" stroke="#222" stroke-width="1.6" fill="none"/><path d="M11.5 14L3 22.5" stroke="#222" stroke-width="1.8"/></svg>
<div class="a" style="left:110px;top:866px;font-size:20px;letter-spacing:-0.65px;color:#333;white-space:nowrap">Type here to search</div>
<!-- task view -->
<svg class="a" style="left:438px;top:864px" width="24" height="24" viewBox="0 0 24 24"><g stroke="#fff" stroke-width="1.4" fill="none"><rect x="2.5" y="5.5" width="13" height="12"/><path d="M0.5 3H17.5M0.5 20H17.5M21 2V22"/></g><rect x="19.6" y="8" width="3" height="3" fill="#fff"/></svg>
<!-- copilot -->
<svg class="a" style="left:499px;top:861px" width="30" height="28" viewBox="0 0 30 28"><defs><linearGradient id="cpa" x1="0" y1="0" x2="0" y2="1"><stop offset="0" stop-color="#2d7ff0"/><stop offset=".45" stop-color="#3fc07a"/><stop offset="1" stop-color="#f3c61a"/></linearGradient><linearGradient id="cpb" x1="0" y1="0" x2="0" y2="1"><stop offset="0" stop-color="#a55cf2"/><stop offset=".55" stop-color="#f062a0"/><stop offset="1" stop-color="#f9a03a"/></linearGradient></defs><path d="M8 1H18Q21 1 20 4.5L14.5 21Q13.5 24 10.5 24H4Q1 24 1.5 20.5L3.5 7Q4.5 1 8 1Z" fill="url(#cpa)"/><path d="M20 4H25.5Q29 4 28.5 8L26.5 21Q25.5 27 21 27H12Q9 27 10 24L15.5 7.5Q16.5 4 20 4Z" fill="url(#cpb)"/><path d="M17.6 7.5L12.2 22" stroke="#1c2b36" stroke-width="2.2"/></svg>
<!-- explorer -->
<svg class="a" style="left:562px;top:863px" width="29" height="24" viewBox="0 0 29 24"><path d="M1 2Q1 0.5 2.5 0.5H10L12.5 2.5H27Q28.5 2.5 28.5 4V22Q28.5 23.5 27 23.5H2.5Q1 23.5 1 22Z" fill="#f9c94a"/><path d="M1 2Q1 0.5 2.5 0.5H10L12.5 2.5V5H1Z" fill="#e7a413"/><path d="M7 23.5V13H22V23.5H18V16.5H11V23.5Z" fill="#3d9be0"/><rect x="11" y="17" width="7" height="3" fill="#f9c94a"/></svg>
<div class="a" style="left:552px;top:897px;width:51px;height:3px;background:#7fb7e8"></div>
<!-- outlook -->
<svg class="a" style="left:624px;top:862px" width="30" height="26" viewBox="0 0 30 26"><path d="M10 5L21 0.5L29.5 6V23Q29.5 25.5 27 25.5H12Z" fill="#28a8ea"/><path d="M10 5L21 0.5L29.5 6L18 12Z" fill="#0f78d4"/><path d="M14 13L29.5 6V14L18 19Z" fill="#0364b8"/><rect x="0.5" y="6" width="15" height="15" rx="2" fill="#1071d1"/><circle cx="8" cy="13.5" r="3.6" stroke="#fff" stroke-width="2" fill="none"/></svg>
<!-- chrome -->
<svg class="a" style="left:687px;top:860px" width="30" height="30" viewBox="0 0 30 30"><circle cx="15" cy="15" r="14.5" fill="#34a853"/><path d="M15 15L2.5 7.7A14.5 14.5 0 0 1 27.5 7.7Z" fill="#ea4335"/><path d="M15 15L27.5 7.7A14.5 14.5 0 0 1 15 29.5Z" fill="#fbbc04"/><circle cx="15" cy="15" r="6.4" fill="#fff"/><circle cx="15" cy="15" r="5" fill="#4285f4"/></svg>
<!-- edge -->
<svg class="a" style="left:749px;top:860px" width="30" height="30" viewBox="0 0 30 30"><defs><linearGradient id="edg" x1="0" y1="0" x2="1" y2="1"><stop offset="0" stop-color="#35c1f1"/><stop offset=".6" stop-color="#5ad36a"/><stop offset="1" stop-color="#1b9de2"/></linearGradient></defs><circle cx="15" cy="15" r="14.5" fill="url(#edg)"/><path d="M1 16Q2 9 9 8.5Q16 8.5 16 14Q13 12 11 14Q9 17 13 20Q18 22.5 24 20Q20 29 13 29Q3 28 1 16Z" fill="#0c59a4"/><path d="M3 14Q5 10 10 10.5Q14.5 11 15 14.5Q11.5 13 10.5 16Q10 20 16 21.5Q9 23 5 20Q2.5 17.5 3 14Z" fill="#1587d8"/><circle cx="13" cy="15.5" r="2.2" fill="#1c2a35"/></svg>
<!-- active chrome -->
<div class="a" style="left:797px;top:850px;width:61px;height:50px;background:#3a464f"></div>
<svg class="a" style="left:812px;top:859px" width="36" height="34" viewBox="0 0 36 34"><circle cx="15" cy="16" r="14.5" fill="#34a853"/><path d="M15 16L2.5 8.7A14.5 14.5 0 0 1 27.5 8.7Z" fill="#ea4335"/><path d="M15 16L27.5 8.7A14.5 14.5 0 0 1 15 30.5Z" fill="#fbbc04"/><circle cx="15" cy="16" r="6.4" fill="#fff"/><circle cx="15" cy="16" r="5" fill="#4285f4"/><circle cx="22" cy="24" r="10" fill="#236b1a"/><text x="22" y="29" text-anchor="middle" font-size="13" font-weight="bold" fill="#a8d79a" font-family="Liberation Sans">D</text></svg>
<div class="a" style="left:797px;top:897px;width:61px;height:3px;background:#7fb7e8"></div>
<!-- paint -->
<svg class="a" style="left:874px;top:860px" width="30" height="30" viewBox="0 0 30 30"><path d="M4 13Q8 5 17 6.5Q25 8.5 25 16Q24 23 15 25Q10 26 11 21Q11.5 18 7 19Q2 19.5 4 13Z" fill="#b8d4e6"/><circle cx="9" cy="14" r="2.2" fill="#e8443a"/><circle cx="12.5" cy="10" r="2" fill="#5cb85c"/><circle cx="17.5" cy="9.5" r="2" fill="#f0b43c"/><circle cx="12.5" cy="18" r="1.3" fill="#1c2a35"/><path d="M14 29L24 6" stroke="#d28a3a" stroke-width="2"/><path d="M22.5 5L26 0.5L28 3Z" fill="#e7b46a"/></svg>
<div class="a" style="left:864px;top:897px;width:51px;height:3px;background:#7fb7e8"></div>
<!-- photos -->
<svg class="a" style="left:937px;top:861px" width="28" height="28" viewBox="0 0 28 28"><defs><linearGradient id="ph" x1="0" y1="0" x2="1" y2="1"><stop offset="0" stop-color="#2f7fdc"/><stop offset="1" stop-color="#7b4fcf"/></linearGradient></defs><rect x="0.5" y="0.5" width="27" height="27" rx="4" fill="url(#ph)"/><path d="M0.5 20L12 9L27.5 22V23.5Q27.5 27.5 23.5 27.5H4.5Q0.5 27.5 0.5 23.5Z" fill="#3cb8f0"/><path d="M7 27.5L17 16.5L27.5 23.5Q27.5 27.5 23.5 27.5Z" fill="#1e8fe0"/><circle cx="19.5" cy="6" r="2.2" fill="#fff"/></svg>
<div class="a" style="left:927px;top:897px;width:51px;height:3px;background:#7fb7e8"></div>
<!-- berita sela -->
<svg class="a" style="left:1122px;top:859px" width="32" height="32" viewBox="0 0 32 32"><path d="M4 11L24 2L30 20L10 29Z" fill="#7a5cf0"/><path d="M2 8H28V25H2Z" fill="#e34f8a" transform="rotate(-8 15 16)"/><path d="M6 13L12 11V21L6 19Z M12 13.5L15 21H13Z" fill="#fff"/><path d="M17 11H24M17 15H24M17 19H24" stroke="#fff" stroke-width="2"/></svg>
<div class="a" style="left:1164px;top:867px;font-size:18px;letter-spacing:-0.55px;color:#fff;white-space:nowrap">Berita sela</div>
<svg class="a" style="left:1272px;top:869px" width="18" height="10" viewBox="0 0 18 10"><path d="M1 9L9 1.5L17 9" stroke="#fff" stroke-width="1.4" fill="none"/></svg>
<svg class="a" style="left:1302px;top:866px" width="20" height="20" viewBox="0 0 20 20"><g stroke="#fff" stroke-width="1.3" fill="none"><rect x="2" y="5" width="11" height="11" rx="2"/><path d="M13 8L18 5.5V15.5L13 13M3 1.5H12M3 19H12"/></g></svg>
<svg class="a" style="left:1329px;top:864px" width="26" height="26" viewBox="0 0 26 26"><g stroke="#fff" stroke-width="1.3" fill="none"><path d="M1 3H21V18H1Z M1 3L20 1.5"/><path d="M7 11A4 4 0 0 1 14 9M15 12A4 4 0 0 1 8 14"/></g><circle cx="20" cy="20" r="4.2" fill="#f79a1e"/></svg>
<svg class="a" style="left:1361px;top:867px" width="22" height="14" viewBox="0 0 22 14"><rect x="1" y="2" width="18" height="10" stroke="#fff" stroke-width="1.3" fill="none"/><rect x="3" y="4" width="6" height="6" fill="#fff"/><rect x="19.5" y="5" width="2" height="4" fill="#fff"/></svg>
<svg class="a" style="left:1391px;top:865px" width="22" height="20" viewBox="0 0 22 20"><path d="M1.5 7H5L10 2.5V17.5L5 13H1.5Z" stroke="#fff" stroke-width="1.3" fill="none"/><path d="M13 7Q15 10 13 13M15.5 5Q19 10 15.5 15M18 3Q23 10 18 17" stroke="#fff" stroke-width="1.2" fill="none"/></svg>
<svg class="a" style="left:1423px;top:865px" width="22" height="20" viewBox="0 0 22 20"><g stroke="#fff" stroke-width="1.3" fill="none"><path d="M1 18A17 17 0 0 1 18 1"/><path d="M5 18A13 13 0 0 1 18 5" opacity=".6"/><path d="M9 18A9 9 0 0 1 18 9" opacity=".6"/><path d="M13 18A5 5 0 0 1 18 13" opacity=".6"/></g><circle cx="18" cy="18" r="1.5" fill="#fff"/></svg>
<div class="a" style="left:1449px;top:855px;width:80px;text-align:center;font-size:15.5px;letter-spacing:-0.2px;color:#fff">2:37 PM</div>
<div class="a" style="left:1449px;top:879px;width:80px;text-align:center;font-size:15.5px;letter-spacing:-0.1px;color:#fff">7/16/2025</div>
<svg class="a" style="left:1545px;top:862px" width="34" height="34" viewBox="0 0 34 34"><path d="M3 2H24V17H10L5 21V17H3Z" fill="#fff"/><path d="M7 6.5H20M7 10H20M7 13.5H16" stroke="#1c2a35" stroke-width="1.2"/><circle cx="22" cy="23" r="8.5" fill="#1c2a35" stroke="#fff" stroke-width="1.3"/><text x="22" y="28" text-anchor="middle" font-size="13" font-weight="bold" fill="#fff" font-family="Liberation Sans">2</text></svg>
<div class="a" style="left:1594px;top:850px;width:1px;height:50px;background:#6a7580"></div>


</body></html>
